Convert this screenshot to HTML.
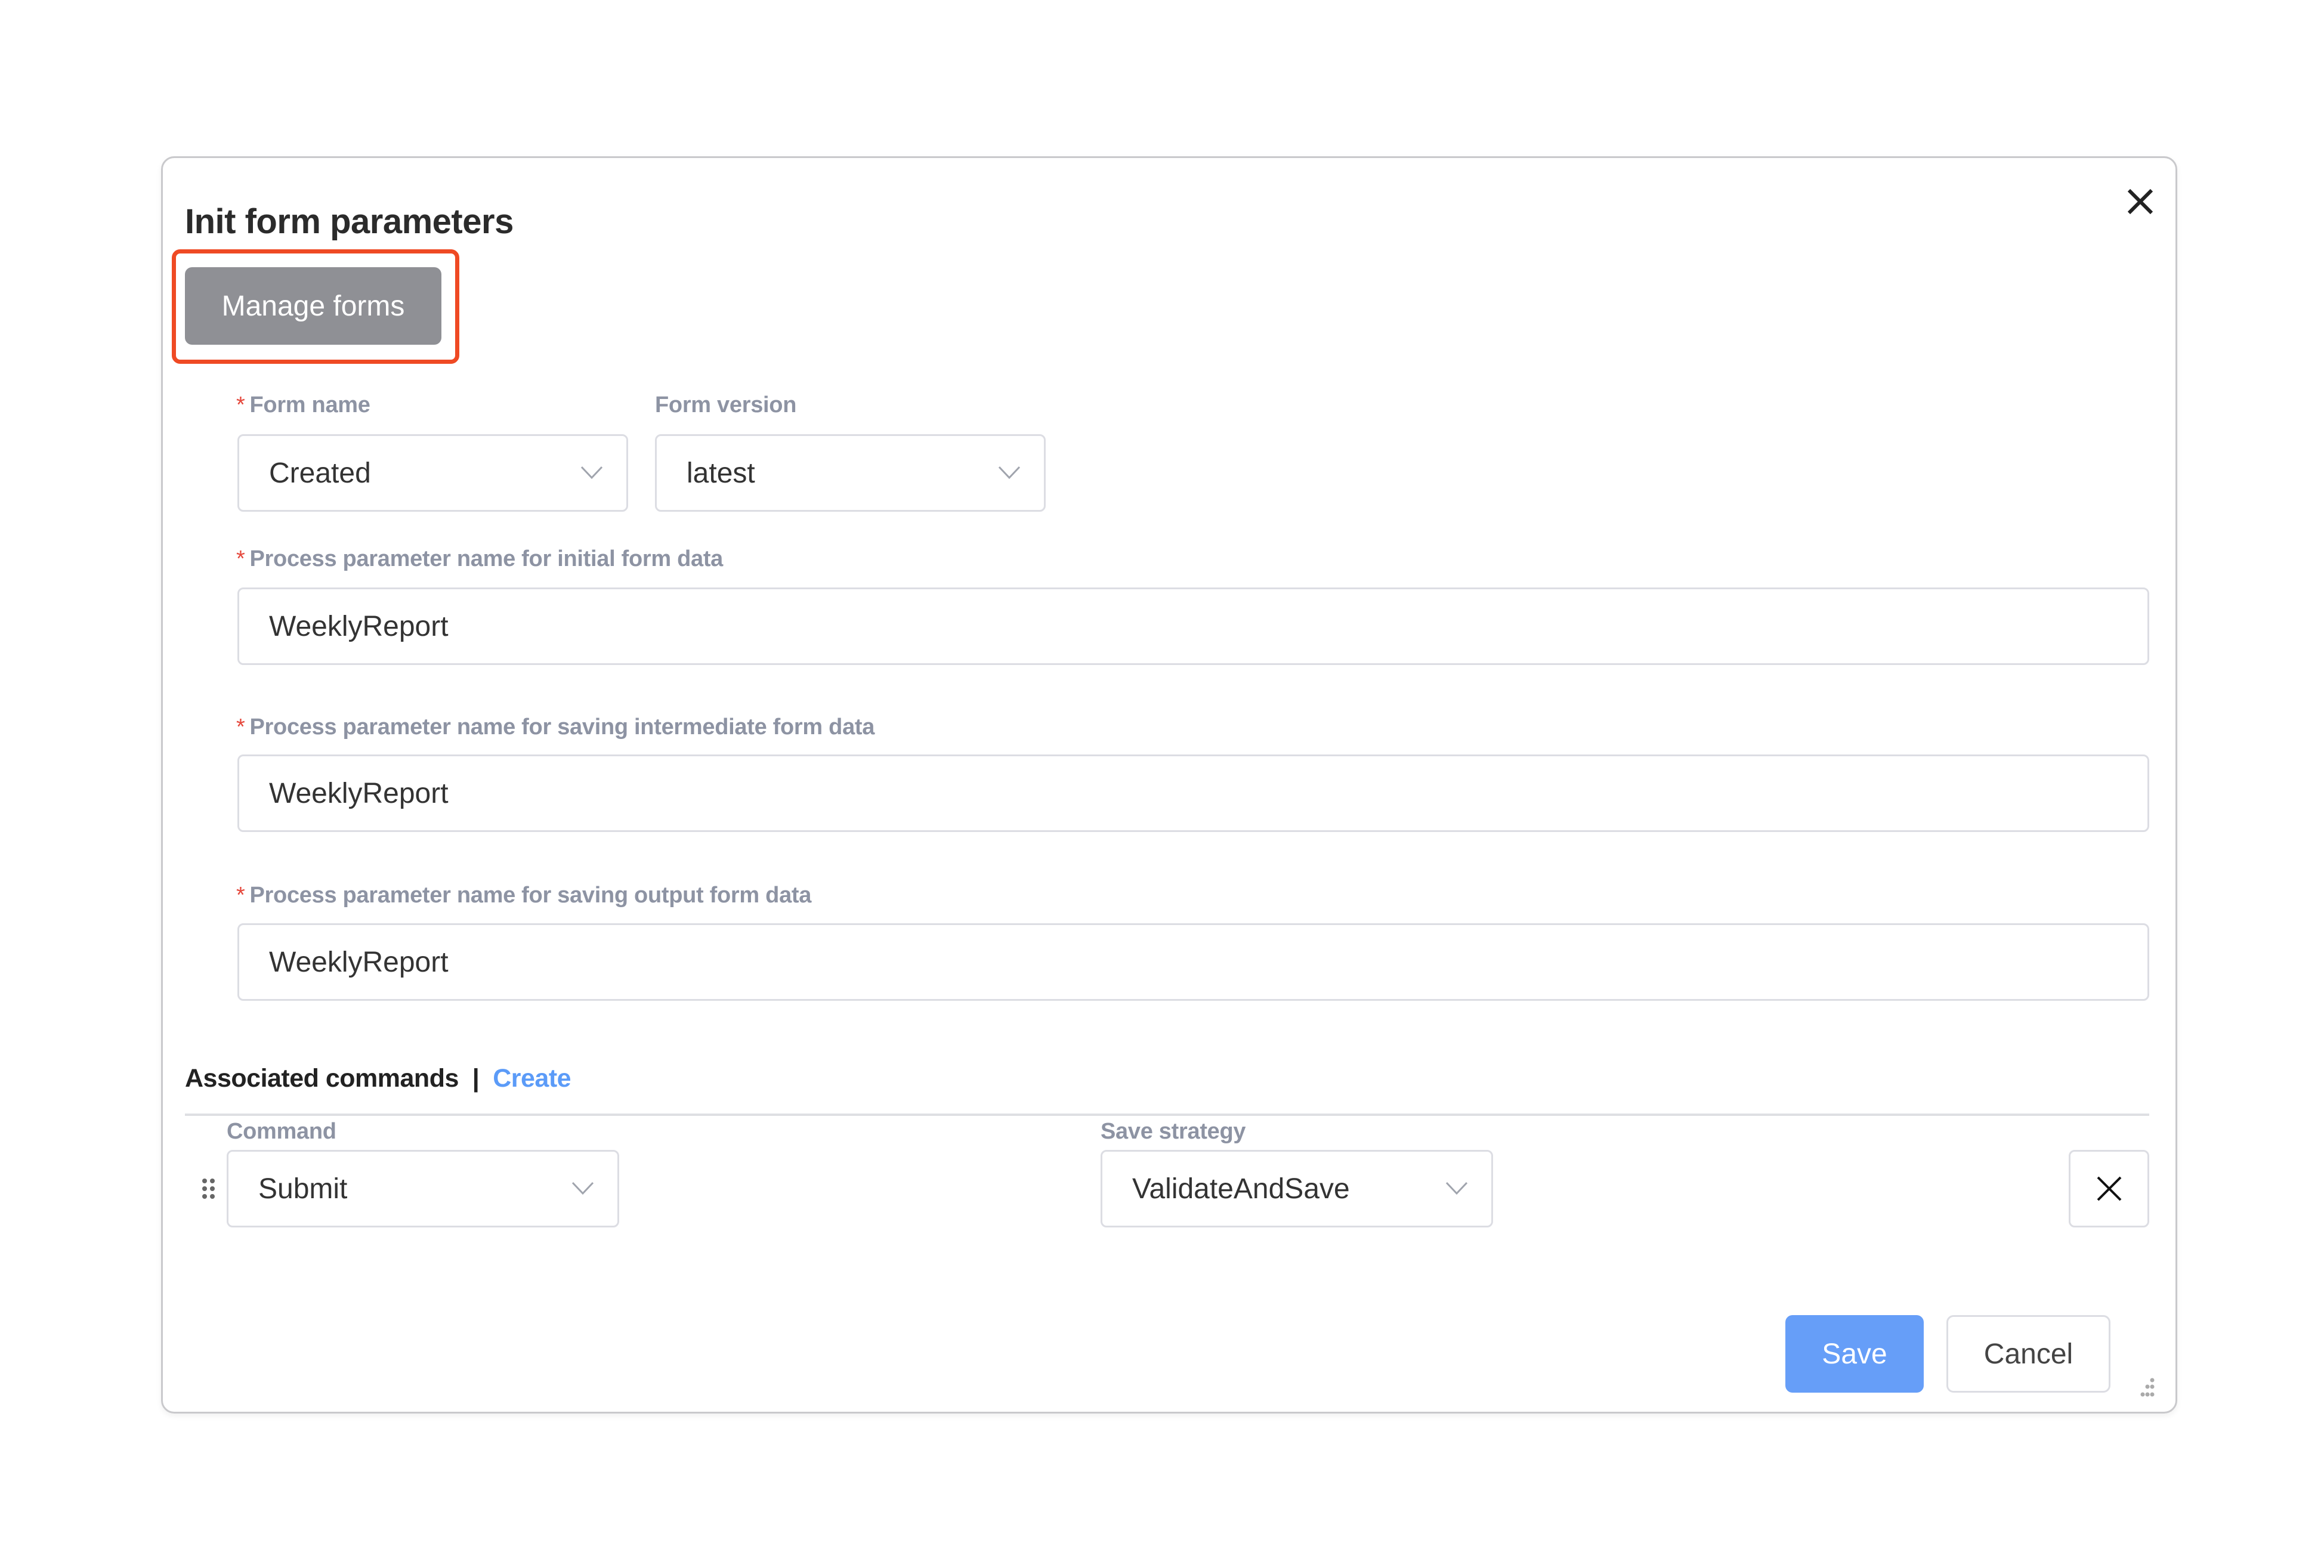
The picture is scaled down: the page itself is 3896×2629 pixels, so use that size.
<!DOCTYPE html>
<html><head><meta charset="utf-8"><style>
*{box-sizing:border-box;margin:0;padding:0}
body{width:3896px;height:2629px;background:#fff;font-family:"Liberation Sans",sans-serif;position:relative;overflow:hidden}
.abs{position:absolute}
.dlg{left:270px;top:262px;width:3380px;height:2108px;border:3px solid #c9c9cc;border-radius:22px;box-shadow:0 4px 10px rgba(0,0,0,.06)}
.title{left:310px;top:338px;font-size:58px;font-weight:bold;color:#2b2b2b;letter-spacing:-0.5px}
.lbl{font-size:38px;font-weight:bold;color:#8d93a3;letter-spacing:-0.3px}
.lbl b{color:#e5483c;font-weight:normal;margin-right:8px}
.box{border:3px solid #dcdde3;border-radius:10px;background:#fff;font-size:48px;color:#333;padding-left:50px;display:flex;align-items:center}
.chev{position:absolute;right:38px;top:50%;margin-top:-14px}
.btn{display:flex;align-items:center;justify-content:center;border-radius:12px;font-size:48px}
</style></head><body>
<div class="abs dlg"></div>
<div class="abs title">Init form parameters</div>
<svg class="abs" style="left:3563px;top:313px" width="50" height="50"><path d="M6 6L44 44M44 6L6 44" stroke="#222" stroke-width="6"/></svg>
<div class="abs" style="left:288px;top:418px;width:482px;height:192px;border:7px solid #ef4a24;border-radius:14px"></div>
<div class="abs btn" style="left:310px;top:448px;width:430px;height:130px;background:#8f9095;color:#fff">Manage forms</div>

<div class="abs lbl" style="left:396px;top:658px"><b>*</b>Form name</div>
<div class="abs lbl" style="left:1098px;top:658px">Form version</div>
<div class="abs box" style="left:398px;top:728px;width:655px;height:130px">Created<svg class="chev" width="40" height="28"><path d="M3 4L20 22L37 4" stroke="#a0a4ad" stroke-width="3" fill="none"/></svg></div>
<div class="abs box" style="left:1098px;top:728px;width:655px;height:130px">latest<svg class="chev" width="40" height="28"><path d="M3 4L20 22L37 4" stroke="#a0a4ad" stroke-width="3" fill="none"/></svg></div>

<div class="abs lbl" style="left:396px;top:916px"><b>*</b>Process parameter name for initial form data</div>
<div class="abs box" style="left:398px;top:985px;width:3205px;height:130px">WeeklyReport</div>
<div class="abs lbl" style="left:396px;top:1198px"><b>*</b>Process parameter name for saving intermediate form data</div>
<div class="abs box" style="left:398px;top:1265px;width:3205px;height:130px">WeeklyReport</div>
<div class="abs lbl" style="left:396px;top:1480px"><b>*</b>Process parameter name for saving output form data</div>
<div class="abs box" style="left:398px;top:1548px;width:3205px;height:130px">WeeklyReport</div>

<div class="abs" style="left:310px;top:1784px;font-size:43px;font-weight:bold;color:#222;letter-spacing:-0.5px">Associated commands&nbsp; |&nbsp; <span style="color:#5b9bf8">Create</span></div>
<div class="abs" style="left:310px;top:1867px;width:3293px;height:4px;background:#dedfe3"></div>

<div class="abs lbl" style="left:380px;top:1876px">Command</div>
<div class="abs lbl" style="left:1845px;top:1876px">Save strategy</div>
<svg class="abs" style="left:337px;top:1975px" width="26" height="36"><g fill="#666"><circle cx="6" cy="5" r="4"/><circle cx="19" cy="5" r="4"/><circle cx="6" cy="18" r="4"/><circle cx="19" cy="18" r="4"/><circle cx="6" cy="31" r="4"/><circle cx="19" cy="31" r="4"/></g></svg>
<div class="abs box" style="left:380px;top:1928px;width:658px;height:130px">Submit<svg class="chev" width="40" height="28"><path d="M3 4L20 22L37 4" stroke="#a0a4ad" stroke-width="3" fill="none"/></svg></div>
<div class="abs box" style="left:1845px;top:1928px;width:658px;height:130px">ValidateAndSave<svg class="chev" width="40" height="28"><path d="M3 4L20 22L37 4" stroke="#a0a4ad" stroke-width="3" fill="none"/></svg></div>
<div class="abs box" style="left:3468px;top:1928px;width:135px;height:130px;padding:0;justify-content:center"><svg width="44" height="44"><path d="M3 3L41 41M41 3L3 41" stroke="#111" stroke-width="4"/></svg></div>

<div class="abs btn" style="left:2993px;top:2205px;width:232px;height:130px;background:#669ef8;color:#fff">Save</div>
<div class="abs btn" style="left:3263px;top:2205px;width:275px;height:130px;border:3px solid #dcdde3;color:#444">Cancel</div>
<svg class="abs" style="left:3588px;top:2310px" width="26" height="34"><g fill="#aaa"><circle cx="20" cy="4" r="3.5"/><circle cx="12" cy="15" r="3.5"/><circle cx="20" cy="15" r="3.5"/><circle cx="4" cy="28" r="3.5"/><circle cx="12" cy="28" r="3.5"/><circle cx="20" cy="28" r="3.5"/></g></svg>
</body></html>
